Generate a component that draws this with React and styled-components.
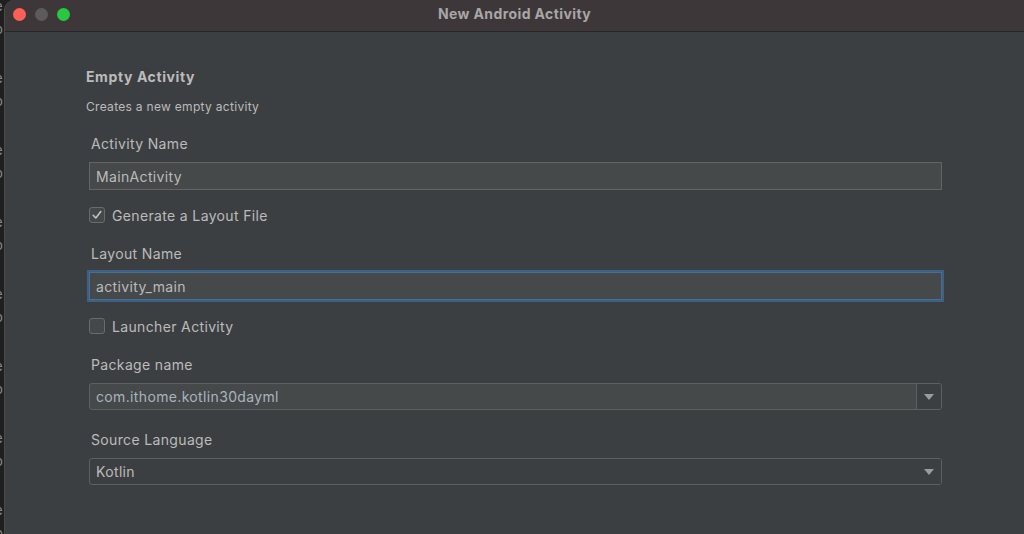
import React from "react";
import styled, { createGlobalStyle } from "styled-components";

const Global = createGlobalStyle`
  html, body { margin: 0; padding: 0; background: #1e1f20; }
  body { font-family: Inter, "Noto Sans", "Liberation Sans", sans-serif; -webkit-font-smoothing: antialiased; }
  * { box-sizing: border-box; }
`;

const Screen = styled.div`
  display: flex;
  width: 1024px;
  height: 534px;
  overflow: hidden;
  background: #1e1f20;
`;

const BackStrip = styled.div`
  width: 4px;
  flex: none;
  overflow: hidden;
  display: flex;
  flex-direction: column;
  margin-top: -5px;
  gap: 26px;
`;

const BackGroup = styled.div`
  display: flex;
  flex-direction: column;
`;

const BackGlyph = styled.span`
  display: block;
  margin-left: -5px;
  height: 23px;
  line-height: 23px;
  font-size: 13px;
  color: #8c8c8c;
  white-space: nowrap;
`;

const Window = styled.div`
  flex: 1;
  display: flex;
  flex-direction: column;
  border-top-left-radius: 10px;
  border-left: 1px solid #4a4a4c;
  overflow: hidden;
  background: #3c3f41;
`;

const TitleBar = styled.div`
  position: relative;
  height: 32px;
  flex: none;
  display: flex;
  align-items: center;
  justify-content: center;
  background: #3d3739;
  border-bottom: 1px solid #27272a;
`;

const Lights = styled.div`
  position: absolute;
  left: 8px;
  top: 8px;
  display: flex;
  gap: 9px;
`;

const Light = styled.span`
  width: 13px;
  height: 13px;
  border-radius: 50%;
  background: ${(p) => p.$c};
`;

const Title = styled.div`
  font-size: 14px;
  font-weight: 700;
  letter-spacing: 0.4px;
  color: #a8a6a7;
  margin-top: -4px;
`;

const Content = styled.div`
  flex: 1;
  padding: 36px 82px 0 81px;
  display: flex;
  flex-direction: column;
`;

const Heading = styled.div`
  font-size: 14px;
  line-height: 18px;
  font-weight: 700;
  letter-spacing: 0.6px;
  color: #bbbbbb;
`;

const Description = styled.div`
  font-size: 12px;
  line-height: 16px;
  letter-spacing: 0.3px;
  color: #bbbbbb;
  margin-top: 13px;
`;

const Group = styled.div`
  display: flex;
  flex-direction: column;
  gap: 9px;
  margin-top: ${(p) => p.$mt}px;
  padding-left: 3px;
`;

const Label = styled.div`
  font-size: 14px;
  line-height: 18px;
  letter-spacing: 0.35px;
  color: #bbbbbb;
  padding-left: 2px;
`;

const TextField = styled.div`
  height: 28px;
  display: flex;
  align-items: center;
  padding: 0 6px;
  font-size: 14px;
  letter-spacing: 0.35px;
  color: #bbbbbb;
  background: #45494a;
  border: 1px solid ${(p) => (p.$focus ? "#466d94" : "#646464")};
  box-shadow: ${(p) => (p.$focus ? "0 0 0 2px #3d6185" : "none")};
`;

const Combo = styled.div`
  height: 27px;
  display: flex;
  align-items: stretch;
  border: 1px solid #5e6060;
  border-radius: 3px;
  overflow: hidden;
  background: ${(p) => (p.$editable ? "#45494a" : "#3c3f41")};
`;

const ComboText = styled.div`
  flex: 1;
  display: flex;
  align-items: center;
  padding: 0 6px;
  font-size: 14px;
  letter-spacing: 0.35px;
  color: ${(p) => (p.$blue ? "#a9b4bf" : "#bbbbbb")};
`;

const ArrowBox = styled.div`
  width: 25px;
  flex: none;
  display: flex;
  align-items: center;
  justify-content: center;
  background: #3c3f41;
  border-left: ${(p) => (p.$divider ? "1px solid #5e6060" : "none")};
`;

const CheckRow = styled.label`
  display: flex;
  align-items: center;
  gap: 7px;
  height: 18px;
  margin-top: ${(p) => p.$mt}px;
  padding-left: 3px;
  font-size: 14px;
  letter-spacing: 0.35px;
  color: #bbbbbb;
`;

const Box = styled.span`
  width: 16px;
  height: 16px;
  border: 1px solid #6b6b6b;
  border-radius: 3px;
  background: #43494a;
  display: flex;
  align-items: center;
  justify-content: center;
`;

const Arrow = () => (
  <svg width="10" height="6" viewBox="0 0 10 6">
    <path d="M0 0 H10 L5 6 Z" fill="#9b9b9b" />
  </svg>
);

const Check = () => (
  <svg width="12" height="12" viewBox="0 0 12 12">
    <path d="M2.2 6.3 L4.8 9 L9.8 2.6" fill="none" stroke="#c2c2c2" strokeWidth="1.6" strokeLinecap="round" strokeLinejoin="round" />
  </svg>
);

export default function App() {
  const groups = Array.from({ length: 8 });
  return (
    <>
      <Global />
      <Screen>
        <BackStrip>
          {groups.map((_, i) => (
            <BackGroup key={i}>
              <BackGlyph>e</BackGlyph>
              <BackGlyph>o</BackGlyph>
            </BackGroup>
          ))}
        </BackStrip>
        <Window>
          <TitleBar>
            <Lights>
              <Light $c="#fe5f57" />
              <Light $c="#5d5a5c" />
              <Light $c="#28c840" />
            </Lights>
            <Title>New Android Activity</Title>
          </TitleBar>
          <Content>
            <Heading>Empty Activity</Heading>
            <Description>Creates a new empty activity</Description>

            <Group $mt={20}>
              <Label>Activity Name</Label>
              <TextField>MainActivity</TextField>
            </Group>

            <CheckRow $mt={16}>
              <Box>
                <Check />
              </Box>
              Generate a Layout File
            </CheckRow>

            <Group $mt={21}>
              <Label>Layout Name</Label>
              <TextField $focus>activity_main</TextField>
            </Group>

            <CheckRow $mt={17}>
              <Box />
              Launcher Activity
            </CheckRow>

            <Group $mt={21}>
              <Label>Package name</Label>
              <Combo $editable>
                <ComboText $blue>com.ithome.kotlin30dayml</ComboText>
                <ArrowBox $divider>
                  <Arrow />
                </ArrowBox>
              </Combo>
            </Group>

            <Group $mt={21}>
              <Label>Source Language</Label>
              <Combo>
                <ComboText>Kotlin</ComboText>
                <ArrowBox>
                  <Arrow />
                </ArrowBox>
              </Combo>
            </Group>
          </Content>
        </Window>
      </Screen>
    </>
  );
}
